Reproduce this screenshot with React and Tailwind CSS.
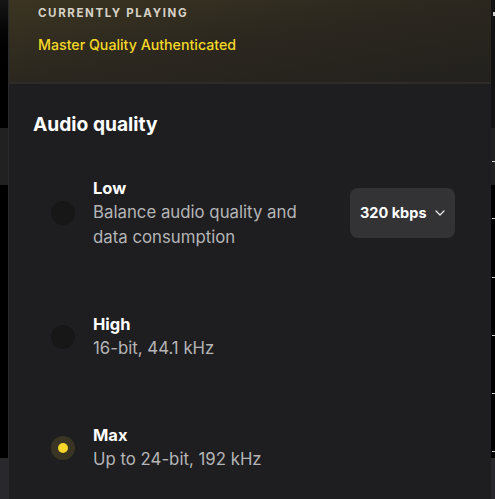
import React from 'react'

const font = { fontFamily: 'Inter, "Noto Sans", sans-serif' }

// a radio dot, yellow when picked
const Radio = ({ checked }) => (
     <div className={`flex h-6 w-6 shrink-0 items-center justify-center rounded-full ${checked ? 'bg-[#3a3523]' : 'bg-[#171717]'}`}>
          {checked && <div className="h-[10px] w-[10px] rounded-full bg-[#f7d52a]" />}
     </div>
)

const QualityRow = ({ title, lines, checked, children }) => (
     <div className="flex items-center">
          <div className="flex w-[60px] shrink-0 justify-start pl-[18px]">
               <Radio checked={checked} />
          </div>
          <div className="flex-1">
               <div className="text-[16.5px] font-bold leading-6 text-white">{title}</div>
               {lines.map((l) => (
                    <div key={l} className="text-[16.8px] leading-[25px] text-[#b5b5b7]">{l}</div>
               ))}
          </div>
          {children}
     </div>
)

export default function App() {
     return (
          <div className="flex h-[499px] w-[495px] overflow-hidden bg-black" style={font}>
               {/* left page strip behind the sheet */}
               <div className="flex w-[8px] flex-col">
                    <div className="h-[75px] bg-gradient-to-b from-[#161616] to-black" />
                    <div className="h-[53px] bg-black" />
                    <div className="h-[57px] bg-[#212121]" />
                    <div className="h-[273px] bg-black" />
                    <div className="flex-1 bg-[#28282d]" />
               </div>

               {/* sheet */}
               <div className="flex w-[483px] flex-col border-l border-[#2a2a2c] bg-[#1e1e20]">
                    <div className="h-[84px] border-b-2 border-[#2e2c27] bg-gradient-to-br from-[#3b3421] via-[#2b271f] to-[#23211e] px-[29px] pt-[6px]">
                         <div className="text-[11.5px] font-bold uppercase leading-[14px] tracking-[0.14em] text-[#d6d1c6]">Currently playing</div>
                         <div className="mt-[17px] text-[14.2px] font-medium leading-4 text-[#f6d924]">Master Quality Authenticated</div>
                    </div>

                    <div className="flex flex-col pr-[36px] pl-[24px] pt-[28px]">
                         <div className="text-[19.2px] font-bold leading-6 text-white">Audio quality</div>

                         <div className="mt-10 flex flex-col gap-[62px]">
                              <QualityRow title="Low" lines={['Balance audio quality and', 'data consumption']}>
                                   <button className="flex h-[50px] w-[105px] items-center gap-[8px] rounded-lg bg-[#333335] pl-[10px] text-[14.5px] font-bold text-white">
                                        320 kbps
                                        <svg width="10" height="6" viewBox="0 0 10 6" fill="none">
                                             <path d="M1 1l4 4 4-4" stroke="#e6e6e6" strokeWidth="1.3" strokeLinecap="round" strokeLinejoin="round" />
                                        </svg>
                                   </button>
                              </QualityRow>
                              <QualityRow title="High" lines={['16-bit, 44.1 kHz']} />
                              <QualityRow title="Max" lines={['Up to 24-bit, 192 kHz']} checked />
                         </div>
                    </div>
               </div>

               {/* right page strip with list ticks */}
               <div className="relative flex w-[4px] flex-col">
                    <div className="h-[128px] bg-[#121212]" />
                    <div className="h-[57px] bg-[#202020]" />
                    <div className="h-[273px] bg-black" />
                    <div className="flex-1 bg-[#28282d]" />
                    <div className="absolute top-[12px] right-0 h-[4px] w-[2px] bg-[#d0d0d0]" />
                    <div className="absolute top-[161px] right-0 h-px w-[3px] bg-[#cfcfcf]" />
                    <div className="absolute top-[218px] right-0 h-px w-[3px] bg-[#cfcfcf]" />
                    <div className="absolute top-[277px] right-0 h-px w-[3px] bg-[#cfcfcf]" />
                    <div className="absolute top-[335px] right-0 h-px w-[3px] bg-[#cfcfcf]" />
                    <div className="absolute top-[393px] right-0 h-px w-[3px] bg-[#cfcfcf]" />
                    <div className="absolute top-[451px] right-0 h-px w-[3px] bg-[#cfcfcf]" />
               </div>
          </div>
     )
}
